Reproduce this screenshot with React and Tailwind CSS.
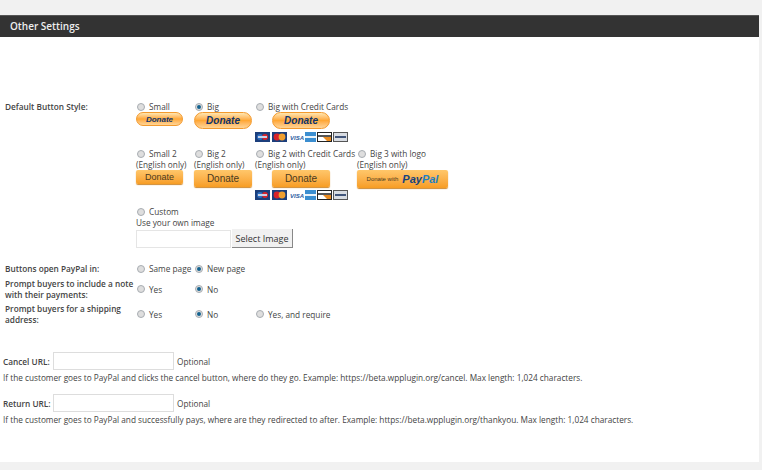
function Radio({ checked }) {
  return (
    <span className="inline-flex shrink-0 w-[8px] h-[8px] rounded-full border border-[#a8adb2] bg-[#dedede] items-center justify-center">
      {checked && <span className="w-[4px] h-[4px] rounded-full bg-[#14628f]"></span>}
    </span>
  )
}

function Option({ label, checked, className = "" }) {
  return (
    <div className={"flex items-center gap-[4px] h-[11px] pl-[1px] whitespace-nowrap " + className}>
      <Radio checked={checked} />
      <span>{label}</span>
    </div>
  )
}

function PillButton({ big }) {
  return (
    <div className={"flex items-center justify-center rounded-full border border-[#f39a2e] bg-gradient-to-b from-[#ffe6b0] via-[#ffa733] to-[#ffd596] italic font-bold text-[#10346b] font-['Liberation_Sans',sans-serif] " + (big ? "w-[58px] h-[17px] text-[10px]" : "w-[47px] h-[14px] text-[8px]")}>
      Donate
    </div>
  )
}

function FlatButton({ big }) {
  return (
    <div className={"flex items-center justify-center rounded-[2px] bg-gradient-to-b from-[#ffc76a] to-[#f79d22] text-[#4a3a20] font-['Liberation_Sans',sans-serif] shadow-[0_1px_1px_#d08a30] " + (big ? "w-[58px] h-[17px] text-[10px]" : "w-[47px] h-[14px] text-[9px]")}>
      Donate
    </div>
  )
}

function Cards() {
  return (
    <svg width="93" height="11" viewBox="0 0 93 11" className="block">
      <rect x="0" y="0" width="15" height="10" fill="#1c3f7c" />
      <circle cx="5" cy="5" r="3" fill="#2d6fc0" />
      <circle cx="10" cy="5" r="3" fill="#d8232a" />
      <rect x="3" y="4" width="9" height="2" fill="#c8d0e8" />
      <rect x="17" y="0" width="15" height="10" fill="#1c3f7c" />
      <circle cx="22" cy="5" r="3.4" fill="#d8232a" />
      <circle cx="27" cy="5" r="3.4" fill="#f0a030" />
      <text x="35" y="7.5" fontSize="6" fontWeight="700" fontStyle="italic" fontFamily="Liberation Sans, sans-serif" fill="#2a5aa0">VISA</text>
      <rect x="50" y="0" width="11" height="10" fill="#3b8ed0" />
      <rect x="50" y="4" width="11" height="2" fill="#e8f2fa" />
      <rect x="62.5" y="0.5" width="14" height="9" fill="#fff" stroke="#222" />
      <rect x="63" y="3" width="13" height="2" fill="#555" />
      <path d="M68 5 L76 5 L76 9 L72 9 Z" fill="#e88a20" />
      <rect x="78.5" y="0.5" width="14" height="9" fill="#d8dce2" stroke="#555" />
      <rect x="80" y="4" width="11" height="2" fill="#41557a" />
    </svg>
  )
}

function PayPalButton() {
  return (
    <div className="flex items-center justify-center gap-[4px] w-[91px] h-[18px] rounded-[2px] bg-gradient-to-b from-[#ffc76a] to-[#f79d22] shadow-[0_1px_1px_#d08a30] font-['Liberation_Sans',sans-serif]">
      <span className="text-[6px] text-[#4a3a20]">Donate with</span>
      <span className="italic font-bold text-[11px] text-[#15437f]">Pay<span className="text-[#1b80c4]">Pal</span></span>
    </div>
  )
}

function ChoiceRow({ label, options, className = "" }) {
  return (
    <div className={"flex items-center " + className}>
      <div className="w-[131px] shrink-0 font-semibold leading-[11px]">{label}</div>
      <div className="grid grid-cols-[58px_61px_102px]">
        {options.map((o, i) => (
          <Option key={i} label={o.label} checked={o.checked} />
        ))}
      </div>
    </div>
  )
}

function UrlField({ label, help, className = "" }) {
  return (
    <div className={"pl-[3px] " + className}>
      <div className="flex items-center">
        <span className="w-[50px] shrink-0 font-semibold whitespace-nowrap">{label}</span>
        <div className="w-[121px] h-[18px] border border-[#ddd] bg-white"></div>
        <span className="ml-[3px]">Optional</span>
      </div>
      <p className="mt-[2px] h-[11px] whitespace-nowrap">{help}</p>
    </div>
  )
}

export default function App() {
  return (
    <div className="min-h-[470px] bg-[#f1f1f1] pt-[15px] pb-[8px] pr-[3px] text-[8.25px] leading-[11px] text-[#444] font-['Open_Sans',sans-serif]">
      <div className="h-[22px] flex items-center pl-[10px] bg-[#333] border-t border-[#555] text-[10px] font-semibold text-[#eee]">
        Other Settings
      </div>
      <div className="h-[425px] bg-white pt-[64px] overflow-hidden">
        <div className="flex pl-[5px]">
          <div className="w-[131px] shrink-0 font-semibold">Default Button Style:</div>
          <div>
            <div className="grid grid-cols-[58px_61px_102px_100px]">
              <div>
                <Option label="Small" />
                <PillButton />
              </div>
              <div>
                <Option label="Big" checked />
                <PillButton big />
              </div>
              <div className="h-[47px]">
                <Option label="Big with Credit Cards" />
                <div className="ml-[17px]"><PillButton big /></div>
                <div className="mt-[3px]"><Cards /></div>
              </div>
            </div>
            <div className="grid grid-cols-[58px_61px_102px_100px]">
              <div>
                <Option label="Small 2" />
                <div className="whitespace-nowrap">(English only)</div>
                <FlatButton />
              </div>
              <div>
                <Option label="Big 2" />
                <div className="whitespace-nowrap">(English only)</div>
                <FlatButton big />
              </div>
              <div className="h-[58px]">
                <Option label="Big 2 with Credit Cards" />
                <div>(English only)</div>
                <div className="ml-[17px]"><FlatButton big /></div>
                <div className="mt-[3px]"><Cards /></div>
              </div>
              <div>
                <Option label="Big 3 with logo" />
                <div className="whitespace-nowrap">(English only)</div>
                <PayPalButton />
              </div>
            </div>
            <Option label="Custom" />
            <div>Use your own image</div>
            <div className="flex items-center mt-[1px]">
              <div className="w-[95px] h-[18px] border border-[#e5e5e5] bg-white"></div>
              <div className="ml-[1px] w-[61px] h-[19px] flex items-center justify-center bg-[#f1f1f1] border-r border-b border-[#888] text-[9px] text-[#333]">Select Image</div>
            </div>
          </div>
        </div>

        <div className="pl-[5px] mt-[15px]">
          <ChoiceRow label="Buttons open PayPal in:" options={[{ label: "Same page" }, { label: "New page", checked: true }]} />
          <ChoiceRow label={<>Prompt buyers to include a note<br />with their payments:</>} options={[{ label: "Yes" }, { label: "No", checked: true }]} className="mt-[4px]" />
          <ChoiceRow label={<>Prompt buyers for a shipping<br />address:</>} options={[{ label: "Yes" }, { label: "No", checked: true }, { label: "Yes, and require" }]} className="mt-[3px]" />
        </div>

        <UrlField className="mt-[27px]" label="Cancel URL:" help="If the customer goes to PayPal and clicks the cancel button, where do they go. Example: https://beta.wpplugin.org/cancel. Max length: 1,024 characters." />
        <UrlField className="mt-[11px]" label="Return URL:" help="If the customer goes to PayPal and successfully pays, where are they redirected to after. Example: https://beta.wpplugin.org/thankyou. Max length: 1,024 characters." />
      </div>
    </div>
  )
}
